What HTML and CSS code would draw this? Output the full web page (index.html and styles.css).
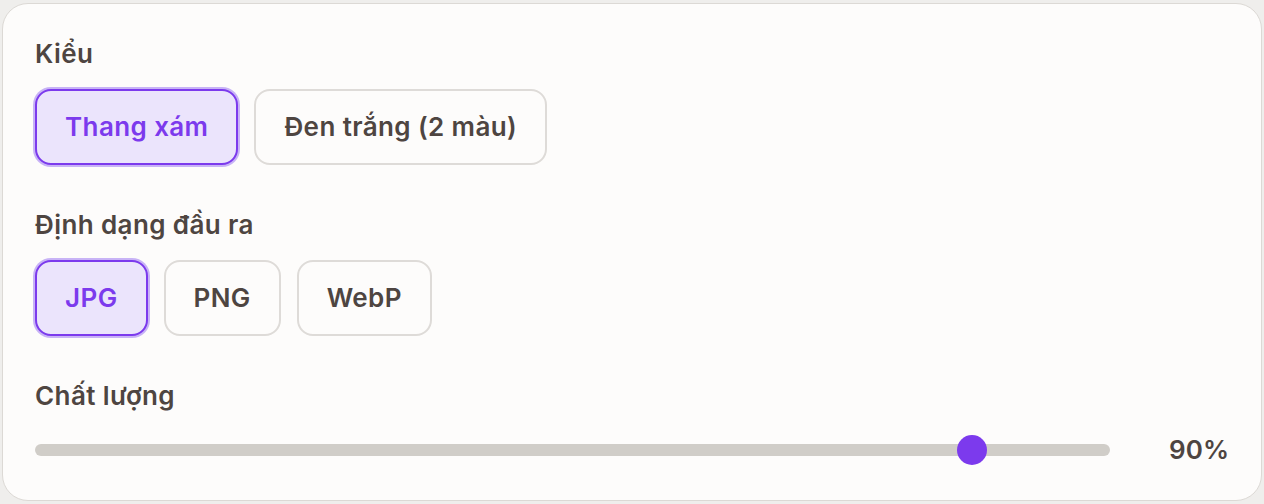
FILE: index.html
```html
<!DOCTYPE html>
<html lang="vi">
<head>
<meta charset="utf-8">
<link rel="stylesheet" href="styles.css">
</head>
<body>
<div class="card">
  <section class="group">
    <div class="label">Kiểu</div>
    <div class="options">
      <button class="opt selected">Thang xám</button>
      <button class="opt">Đen trắng (2 màu)</button>
    </div>
  </section>
  <section class="group">
    <div class="label">Định dạng đầu ra</div>
    <div class="options">
      <button class="opt selected">JPG</button>
      <button class="opt">PNG</button>
      <button class="opt">WebP</button>
    </div>
  </section>
  <section class="group">
    <div class="label">Chất lượng</div>
    <div class="slider-row">
      <div class="track"><div class="thumb" style="left: 87.2%"></div></div>
      <div class="value">90%</div>
    </div>
  </section>
</div>
</body>
</html>
```

FILE: styles.css
```css
html, body {
  margin: 0;
  background: #efeeec;
}
body {
  padding: 3px 2px 3px 2px;
  font-family: Inter, "Noto Sans", sans-serif;
  color: #4e4541;
}
.card {
  box-sizing: border-box;
  height: 498px;
  background: #fdfcfb;
  border: 1px solid #dcd9d5;
  border-radius: 26px;
  padding: 32px 32px 32px 32px;
  display: flex;
  flex-direction: column;
  gap: 42px;
}
.group {
  display: flex;
  flex-direction: column;
}
.label {
  font-size: 26px;
  line-height: 36px;
  font-weight: 600;
  letter-spacing: 0.4px;
  margin-bottom: 17px;
}
.options {
  display: flex;
  gap: 16px;
}
.opt {
  font-family: inherit;
  font-size: 26px;
  line-height: 36px;
  font-weight: 600;
  letter-spacing: 0.4px;
  color: #4e4541;
  background: #fdfcfb;
  border: 2px solid #dedbd8;
  border-radius: 16px;
  padding: 18px 28px;
  margin: 0;
}
.opt.selected {
  color: #7c3aed;
  background: #ebe4fc;
  border-color: #7c3aed;
  box-shadow: 0 0 0 2px #c8b3f6;
}
.slider-row {
  display: flex;
  align-items: center;
  height: 36px;
  margin-top: 1px;
}
.track {
  position: relative;
  flex: 1;
  height: 12px;
  border-radius: 6px;
  background: #d0cdc8;
  margin-right: 59px;
}
.thumb {
  position: absolute;
  top: 50%;
  width: 30px;
  height: 30px;
  margin: -15px 0 0 -15px;
  border-radius: 50%;
  background: #7c3aed;
}
.value {
  font-size: 26px;
  line-height: 36px;
  font-weight: 600;
}
```
